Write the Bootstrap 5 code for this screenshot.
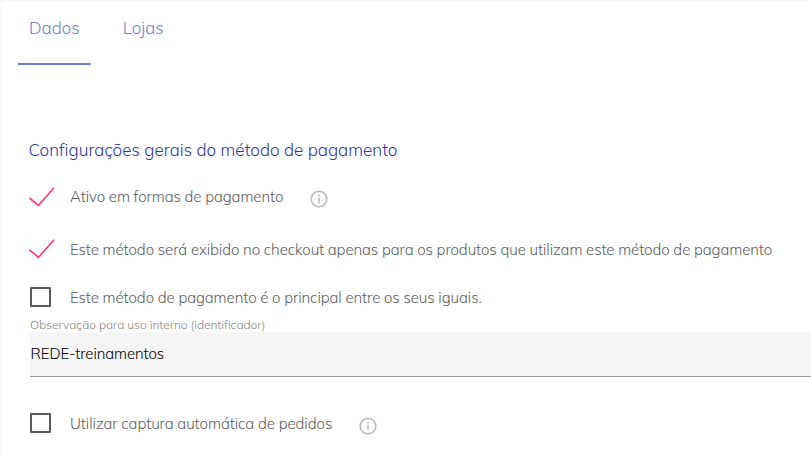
<!DOCTYPE html>
<html lang="pt-BR">
<head>
<meta charset="utf-8">
<meta name="viewport" content="width=device-width, initial-scale=1">
<title>Método de pagamento</title>
<link href="https://cdn.jsdelivr.net/npm/bootstrap@5.3.0/dist/css/bootstrap.min.css" rel="stylesheet">
<style>
body{font-family:Muli,Mulish,Lato,"Open Sans",sans-serif;font-size:15px;font-weight:300;line-height:20px;color:#5c5c5c;background:#fff}
.panel{height:455px;border-left:1px solid #f8f8f8;border-top:1px solid #f8f8f8}
.tabs{padding-left:17px;height:64px}
.tabs .nav-link{color:#7780d0;font-size:17px;line-height:20px;padding:17px 11px 0;height:64px;border-bottom:2px solid transparent}
.tabs .nav-link.active{border-color:#707fd0}
.tabs .nav-item+.nav-item{margin-left:21px}
.section-title{font-size:17px;font-weight:300;line-height:24px;letter-spacing:.045px;color:#3037a8;margin:73px 0 0 27.5px}
.option{padding-left:29px;height:20px;letter-spacing:-.073px}
.option svg{flex:none}
.mark-slot{width:40px;height:20px;flex:none}
.r2 .mark-slot,.r3 .mark-slot{margin-top:-2px}
.check-on{margin-left:-1px}
.box-off{width:21px;height:20px;border:2px solid #5b5b5b;border-radius:1px}
.info{margin-left:27px;margin-top:3px}
.note-label{font-size:12px;line-height:14px;letter-spacing:-.03px;color:#858585;margin:10px 0 0 29px}
.note-input{margin-left:29px;height:45px;background:#f5f5f5;border-bottom:1px solid #999;color:#000;padding-left:.5px;line-height:44px;letter-spacing:-.1px}
.r1{margin-top:25px}.r2{margin-top:33px}.r3{margin-top:28px}.r4{margin-top:36px;letter-spacing:-.05px}
.r4 .option-text{padding-top:2px}
.r4 .info{margin-top:5px}
</style>
</head>
<body class="overflow-hidden">
<main class="panel">
<ul class="nav tabs flex-nowrap">
<li class="nav-item"><a class="nav-link active" href="#">Dados</a></li>
<li class="nav-item"><a class="nav-link" href="#">Lojas</a></li>
</ul>
<h1 class="section-title">Configurações gerais do método de pagamento</h1>
<div class="option r1 d-flex align-items-center"><span class="mark-slot"><svg class="check-on d-block" width="26" height="20" viewBox="0 0 26 20" fill="none" stroke="#ff3d7f" stroke-width="1.7"><path d="M.5 11 9.5 18.3 25 .8"/></svg></span><span>Ativo em formas de pagamento</span><svg class="info" width="18" height="18" viewBox="0 0 18 18" fill="none" stroke="#b9b9b9" stroke-width="1.6"><circle cx="9" cy="9" r="7.8"/><path d="M9 7.8V13M9 4.8v1.7"/></svg></div>
<div class="option r2 d-flex align-items-center"><span class="mark-slot"><svg class="check-on d-block" width="26" height="20" viewBox="0 0 26 20" fill="none" stroke="#ff3d7f" stroke-width="1.7"><path d="M.5 11 9.5 18.3 25 .8"/></svg></span><span class="text-nowrap">Este método será exibido no checkout apenas para os produtos que utilizam este método de pagamento</span></div>
<div class="option r3 d-flex align-items-center"><span class="mark-slot"><span class="box-off d-block"></span></span><span>Este método de pagamento é o principal entre os seus iguais.</span></div>
<label class="note-label d-block">Observação para uso interno (identificador)</label>
<div class="note-input">REDE-treinamentos</div>
<div class="option r4 d-flex align-items-center"><span class="mark-slot"><span class="box-off d-block"></span></span><span class="option-text">Utilizar captura automática de pedidos</span><svg class="info" width="18" height="18" viewBox="0 0 18 18" fill="none" stroke="#b9b9b9" stroke-width="1.6"><circle cx="9" cy="9" r="7.8"/><path d="M9 7.8V13M9 4.8v1.7"/></svg></div>
</main>
<script src="https://cdn.jsdelivr.net/npm/bootstrap@5.3.0/dist/js/bootstrap.bundle.min.js"></script>
</body>
</html>
